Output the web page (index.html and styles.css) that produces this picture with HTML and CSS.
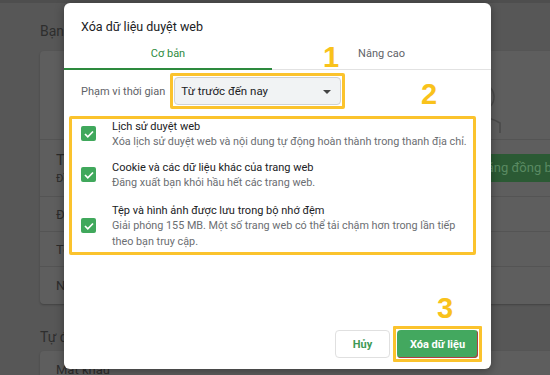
FILE: index.html
```html
<!DOCTYPE html>
<html lang="vi">
<head>
    <meta charset="UTF-8">
    <title>Xóa dữ liệu duyệt web</title>
    <link rel="stylesheet" href="styles.css">
</head>
<body>
    <div class="page">
        <p class="page-label">Bạn và Google</p>
        <section class="card">
            <div class="card-top">
                <svg class="avatar" width="60" height="60" viewBox="0 0 60 60">
                    <circle cx="30" cy="22" r="14" fill="none" stroke="#4a4a4a" stroke-width="1.5"/>
                    <path d="M10 58 V48 Q30 36 50 48 V58" fill="none" stroke="#4a4a4a" stroke-width="1.5"/>
                </svg>
            </div>
            <div class="row row-sync">
                <div>
                    <div class="row-title">Tên người dùng</div>
                    <div class="row-sub">Đồng bộ hóa</div>
                </div>
                <span class="sync-btn">Bật tính năng đồng bộ hóa</span>
            </div>
            <div class="row">Đồng bộ hóa</div>
            <div class="row">Tên và ảnh</div>
            <div class="row">Nhập dấu trang</div>
        </section>
        <p class="page-label second">Tự động điền</p>
        <section class="card">
            <div class="row">Mật khẩu</div>
        </section>
    </div>

    <div class="dialog">
        <h1 class="dialog-title">Xóa dữ liệu duyệt web</h1>
        <div class="tabs">
            <div class="tab active">Cơ bản</div>
            <div class="tab">Nâng cao</div>
        </div>

        <div class="range">
            <span class="range-label">Phạm vi thời gian</span>
            <div class="mark mark-select">
                <div class="select">
                    <span>Từ trước đến nay</span>
                    <span class="caret"></span>
                </div>
            </div>
        </div>

        <div class="mark mark-list">
            <div class="item">
                <span class="check"><svg width="10" height="8" viewBox="0 0 10 8"><path d="M1 4 L3.8 6.8 L9 1.5" fill="none" stroke="#fff" stroke-width="1.7"/></svg></span>
                <div>
                    <div class="item-title">Lịch sử duyệt web</div>
                    <div class="item-desc">Xóa lịch sử duyệt web và nội dung tự động hoàn thành trong thanh địa chỉ.</div>
                </div>
            </div>
            <div class="item">
                <span class="check"><svg width="10" height="8" viewBox="0 0 10 8"><path d="M1 4 L3.8 6.8 L9 1.5" fill="none" stroke="#fff" stroke-width="1.7"/></svg></span>
                <div>
                    <div class="item-title">Cookie và các dữ liệu khác của trang web</div>
                    <div class="item-desc">Đăng xuất bạn khỏi hầu hết các trang web.</div>
                </div>
            </div>
            <div class="item">
                <span class="check"><svg width="10" height="8" viewBox="0 0 10 8"><path d="M1 4 L3.8 6.8 L9 1.5" fill="none" stroke="#fff" stroke-width="1.7"/></svg></span>
                <div>
                    <div class="item-title">Tệp và hình ảnh được lưu trong bộ nhớ đệm</div>
                    <div class="item-desc">Giải phóng 155 MB. Một số trang web có thể tải chậm hơn trong lần tiếp theo bạn truy cập.</div>
                </div>
            </div>
        </div>

        <div class="footer">
            <button class="btn btn-cancel">Hủy</button>
            <div class="mark mark-btn">
                <button class="btn btn-clear">Xóa dữ liệu</button>
            </div>
        </div>

        <span class="num num-1">1</span>
        <span class="num num-2">2</span>
        <span class="num num-3">3</span>
    </div>
</body>
</html>
```

FILE: styles.css
```css
body {
    margin: 0;
    background: #575757;
    font-family: Roboto, "Liberation Sans", Arial, sans-serif;
    overflow: hidden;
    height: 375px;
}

/* trang cai dat phia sau (bi lam mo) */
.page {
    padding: 0 0 0 40px;
    border-top: 3px solid #4e4e4e;
    color: #2c2c2c;
    font-size: 13px;
    overflow: hidden;
    height: 372px;
}

.page-label {
    margin: 0;
    padding: 20px 0 12px;
    font-size: 14px;
    color: #2e2e2e;
}

.page-label.second {
    padding: 25px 0 6px;
}

.card {
    margin-right: -40px;
    background: #5e5e5e;
    border-radius: 4px;
    box-shadow: 0 1px 2px rgba(0, 0, 0, 0.25);
}

.card-top {
    height: 88px;
    display: flex;
    justify-content: flex-end;
    padding-right: 80px;
    align-items: flex-end;
    border-bottom: 1px solid #545454;
}

.avatar {
    margin-bottom: 4px;
}

.row {
    height: 34px;
    display: flex;
    align-items: center;
    padding-left: 16px;
    border-bottom: 1px solid #545454;
}

.row:last-child {
    border-bottom: none;
    height: 37px;
}

.row-sync {
    height: 56px;
    justify-content: space-between;
}

.row-title {
    font-size: 15px;
}

.row-sub {
    font-size: 11px;
    margin-top: 3px;
}

.sync-btn {
    background: #2b5a34;
    color: #5a8a62;
    font-size: 13px;
    padding: 6px 6px 7px 12px;
    border-radius: 3px;
    white-space: nowrap;
}

/* hop thoai */
.dialog {
    position: absolute;
    left: 64px;
    top: 3px;
    width: 427px;
    height: 366px;
    background: #fff;
    border-radius: 6px;
    box-shadow: 0 2px 10px rgba(0, 0, 0, 0.35);
    display: flex;
    flex-direction: column;
}

.dialog-title {
    margin: 0;
    padding: 16px 17px 0;
    font-size: 12.5px;
    font-weight: normal;
    color: #202124;
    line-height: 16px;
}

.tabs {
    display: flex;
    margin-top: 5px;
    border-bottom: 1px solid #e2e2e2;
}

.tab {
    flex: 1;
    text-align: center;
    font-size: 11px;
    color: #5f6368;
    padding: 7px 0 7px;
    line-height: 14px;
}

.tab:first-child {
    flex: 0 0 208px;
}

.tab.active {
    color: #2d8a3e;
    border-bottom: 2px solid #2d8a3e;
    margin-bottom: -1px;
}

.range {
    display: flex;
    align-items: center;
    padding: 3px 0 0 17px;
}

.range-label {
    font-size: 11px;
    color: #5f6368;
    margin-right: 5px;
}

.mark {
    border: 3px solid #fbc32d;
    border-radius: 2px;
}

.mark-select {
    padding: 1px;
}

.select {
    width: 167px;
    height: 28px;
    background: #f1f3f4;
    border: 1px solid #cfd2d4;
    border-radius: 4px;
    display: flex;
    align-items: center;
    justify-content: space-between;
    padding: 0 9px 0 6px;
    box-sizing: border-box;
    font-size: 11.5px;
    color: #202124;
}

.caret {
    width: 0;
    height: 0;
    border-left: 4px solid transparent;
    border-right: 4px solid transparent;
    border-top: 4px solid #444;
    margin-top: 1px;
}

.mark-list {
    margin: 7px 0 0 5px;
    width: 407px;
    height: 139px;
    padding: 0 0 0 9px;
    box-sizing: border-box;
}

.item {
    display: flex;
    align-items: center;
}

.item + .item {
    margin-top: 10px;
}

.item:last-child {
    margin-top: 12px;
}

.check {
    flex: 0 0 15px;
    height: 15px;
    background: #40a85c;
    border-radius: 2px;
    margin: -2px 16px 0 0;
    display: flex;
    align-items: center;
    justify-content: center;
}

.item-title {
    font-size: 11px;
    color: #202124;
    line-height: 15px;
}

.item-desc {
    font-size: 10.8px;
    color: #6b6e72;
    line-height: 16px;
}

.footer {
    margin-top: auto;
    display: flex;
    justify-content: flex-end;
    align-items: center;
    padding: 0 9px 7px 0;
}

.btn {
    font-family: inherit;
    font-size: 11px;
    font-weight: bold;
    height: 28px;
    border-radius: 4px;
    cursor: pointer;
}

.btn-cancel {
    width: 55px;
    background: #fff;
    color: #3e9a55;
    border: 1px solid #e0e0e0;
    margin-right: 3px;
}

.mark-btn {
    padding: 1px;
    border-radius: 1px;
}

.btn-clear {
    width: 81px;
    display: block;
    background: #43a85f;
    color: #fff;
    border: none;
    box-shadow: inset -1px -1px 0 #b04040;
}

.num {
    position: absolute;
    color: #f9c21b;
    font-family: "Liberation Sans", Arial, sans-serif;
    font-weight: bold;
    font-size: 29px;
    line-height: 1;
}

.num-1 {
    left: 259px;
    top: 40px;
}

.num-2 {
    left: 357px;
    top: 77px;
}

.num-3 {
    left: 373px;
    top: 291px;
}
```
